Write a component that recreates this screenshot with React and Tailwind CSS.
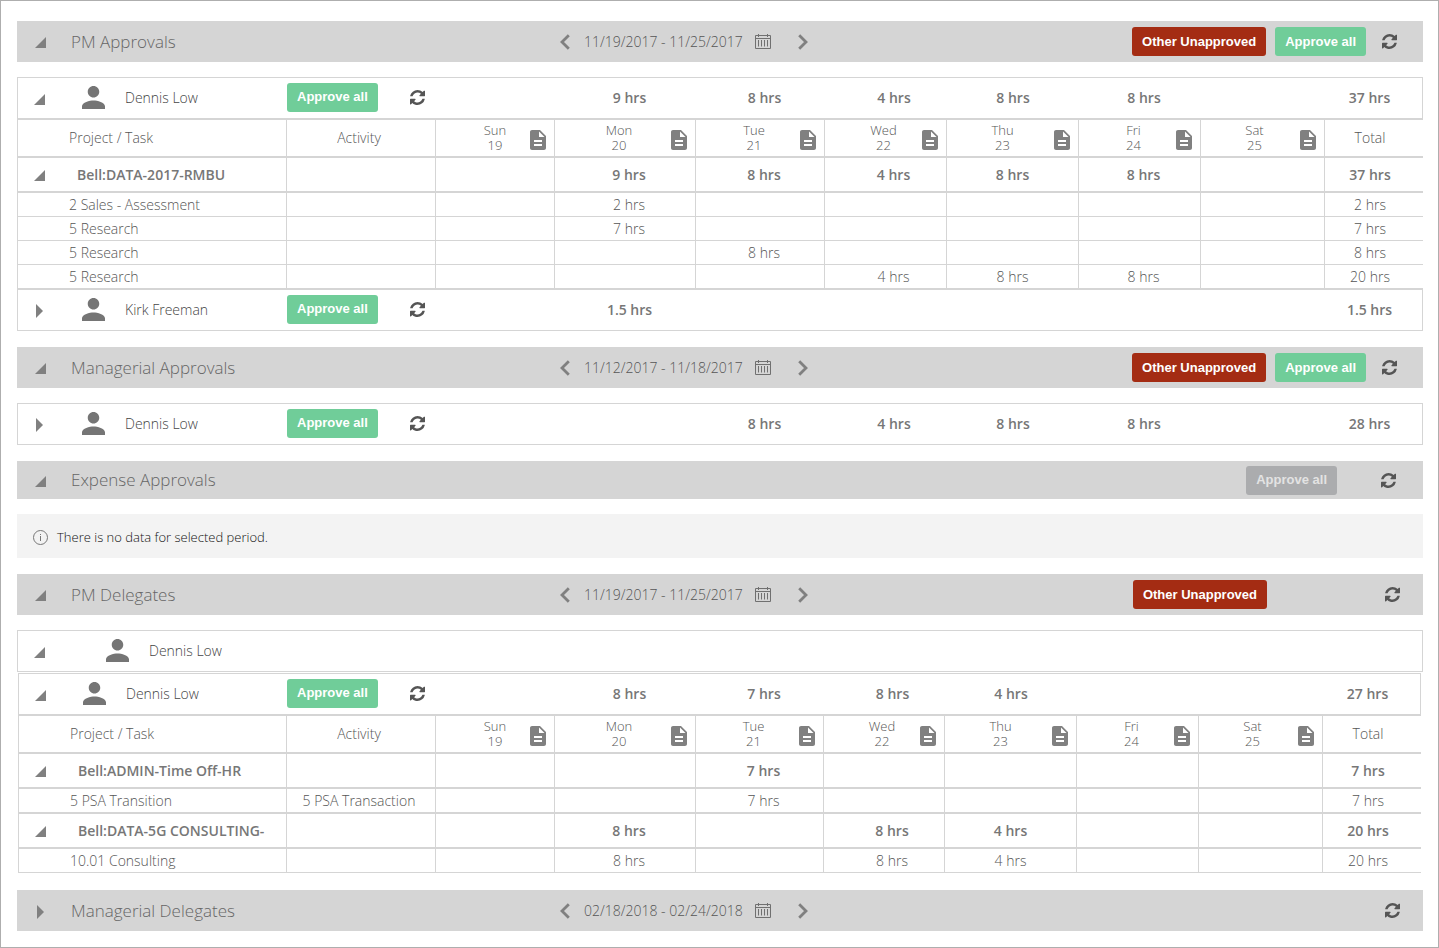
import clsx from "clsx";

// head / cell: left padding that each day column puts on its content
const DAYS = [
  { name: "Sun", date: 19, head: "pl-6", cell: "pl-2" },
  { name: "Mon", date: 20, head: "pl-3", cell: "pl-2" },
  { name: "Tue", date: 21, head: "pl-3", cell: "pl-2" },
  { name: "Wed", date: 22, head: "pl-5", cell: "pl-4" },
  { name: "Thu", date: 23, head: "pl-1", cell: "pl-0" },
  { name: "Fri", date: 24, head: "pl-3", cell: "pl-2" },
  { name: "Sat", date: 25, head: "pl-2", cell: "pl-2" },
];

const pmApprovals = [
  {
    type: "person",
    name: "Dennis Low",
    open: true,
    first: true,
    hours: ["", "9", "8", "4", "8", "8", ""],
    total: "37",
  },
  { type: "days" },
  {
    type: "project",
    name: "Bell:DATA-2017-RMBU",
    hours: ["", "9", "8", "4", "8", "8", ""],
    total: "37",
  },
  { type: "task", name: "2 Sales - Assessment", hours: ["", "2", "", "", "", "", ""], total: "2" },
  { type: "task", name: "5 Research", hours: ["", "7", "", "", "", "", ""], total: "7" },
  { type: "task", name: "5 Research", hours: ["", "", "8", "", "", "", ""], total: "8" },
  {
    type: "task",
    name: "5 Research",
    hours: ["", "", "", "4", "8", "8", ""],
    total: "20",
    thick: true,
  },
  {
    type: "person",
    name: "Kirk Freeman",
    hours: ["", "1.5", "", "", "", "", ""],
    total: "1.5",
    last: true,
  },
];

const managerialApprovals = [
  {
    type: "person",
    name: "Dennis Low",
    first: true,
    last: true,
    hours: ["", "", "8", "4", "8", "8", ""],
    total: "28",
  },
];

const pmDelegates = [
  {
    type: "person",
    name: "Dennis Low",
    open: true,
    first: true,
    hours: ["", "8", "7", "8", "4", "", ""],
    total: "27",
  },
  { type: "days" },
  {
    type: "project",
    name: "Bell:ADMIN-Time Off-HR",
    hours: ["", "", "7", "", "", "", ""],
    total: "7",
  },
  {
    type: "task",
    name: "5 PSA Transition",
    activity: "5 PSA Transaction",
    hours: ["", "", "7", "", "", "", ""],
    total: "7",
    thick: true,
  },
  {
    type: "project",
    name: "Bell:DATA-5G CONSULTING-",
    hours: ["", "8", "", "8", "4", "", ""],
    total: "20",
  },
  {
    type: "task",
    name: "10.01 Consulting",
    hours: ["", "8", "", "8", "4", "", ""],
    total: "20",
  },
];

function RefreshIcon() {
  return (
    <svg viewBox="0 128 1536 1536" className="w-[15px] h-[15px] fill-[#555]">
      <path d="M1511 1056q0 5-1 7-64 268-268 434.500t-478 166.500q-146 0-282.500-55t-243.500-157l-129 129q-19 19-45 19t-45-19-19-45v-448q0-26 19-45t45-19h448q26 0 45 19t19 45-19 45l-137 137q71 66 161 102t187 36q134 0 250-65t186-179q11-17 53-117 8-23 30-23h192q13 0 22.500 9.500t9.500 22.500zm25-800v448q0 26-19 45t-45 19h-448q-26 0-45-19t-19-45 19-45l138-138q-148-137-349-137-134 0-250 65t-186 179q-11 17-53 117-8 23-30 23h-199q-13 0-22.500-9.500t-9.500-22.500v-7q65-268 270-434.500t480-166.500q146 0 284 55.500t245 156.500l130-129q19-19 45-19t45 19 19 45z" />
    </svg>
  );
}

function PersonIcon() {
  return (
    <svg viewBox="4 4 16 16" className="w-[23px] h-[23px] shrink-0 fill-[#757575]">
      <path d="M12 12c2.210 0 4-1.790 4-4s-1.790-4-4-4-4 1.790-4 4 1.790 4 4 4zm0 2c-2.670 0-8 1.340-8 4v2h16v-2c0-2.660-5.330-4-8-4z" />
    </svg>
  );
}

function NoteIcon() {
  return (
    <svg viewBox="4 2 16 20" className="w-4 h-5 fill-[#808080]">
      <path d="M14 2H6c-1.100 0-1.990.9-1.990 2L4 20c0 1.100.890 2 1.990 2H18c1.100 0 2-.9 2-2V8l-6-6zm2 16H8v-2h8v2zm0-4H8v-2h8v2zm-3-5V3.500L18.500 9H13z" />
    </svg>
  );
}

function CalendarIcon() {
  return (
    <svg viewBox="0 0 16 15" className="w-4 h-[15px]" fill="none" stroke="#707070">
      <path d="M.5 1.500h15v13H.5zM.5 4.500h15M3.500 0v3M12.500 0v3M3.500 6v6.500M6.500 6v6.500M9.500 6v6.500M12.500 6v6.500" />
    </svg>
  );
}

function Chevron({ next }) {
  return (
    <svg viewBox="0 0 10 16" className="w-[10px] h-4" fill="none" stroke="#808080" strokeWidth="2.8">
      <path d={next ? "M1.200 1.200 8 8l-6.800 6.800" : "M8.800 1.200 2 8l6.800 6.800"} />
    </svg>
  );
}

function Toggle({ open, label }) {
  return (
    <button
      aria-label={label}
      aria-expanded={!!open}
      className="w-3 h-4 mt-0.5 shrink-0 flex items-center cursor-pointer"
    >
      {open ? (
        <svg viewBox="0 0 11 11" className="w-[11px] h-[11px] fill-[#808080]">
          <path d="M0 11h11V0z" />
        </svg>
      ) : (
        <svg viewBox="0 0 7 14" className="ml-0.5 w-[7px] h-[14px] fill-[#808080]">
          <path d="M0 0v14l7-7z" />
        </svg>
      )}
    </button>
  );
}

function Button({ color, children, ...props }) {
  return (
    <button
      className={clsx(
        "h-[29px] px-[10px] rounded-[3px] shrink-0 whitespace-nowrap font-['Liberation_Sans',Arial,sans-serif] text-[13px] font-bold",
        color === "red" && "bg-[#a42c13] text-white",
        color === "green" && "bg-[#70cd99] text-white",
        color === "gray" && "bg-[#abacae] text-[#e3e3e3]"
      )}
      {...props}
    >
      {children}
    </button>
  );
}

function Refresh() {
  return (
    <button aria-label="Refresh" className="shrink-0 cursor-pointer">
      <RefreshIcon />
    </button>
  );
}

function SectionBar({ title, open, range, height = "h-[41px]", children }) {
  return (
    <header className={clsx("flex items-center bg-[#d5d5d5]", height)}>
      <div className="w-[543px] shrink-0 flex items-center pl-[18px]">
        <Toggle open={open} label={title} />
        <h2 className="ml-6 text-[17px] leading-6 text-[#666]">{title}</h2>
      </div>
      {range && (
        <div className="flex items-center text-[14px] text-[#555]">
          <button aria-label="Previous week">
            <Chevron />
          </button>
          <span className="w-40 ml-[14px] whitespace-nowrap">{range}</span>
          <button aria-label="Pick dates" className="ml-[11px]">
            <CalendarIcon />
          </button>
          <button aria-label="Next week" className="ml-[27px]">
            <Chevron next />
          </button>
        </div>
      )}
      <div className="ml-auto flex items-center">{children}</div>
    </header>
  );
}

function Hours({ value }) {
  return value ? `${value} hrs` : null;
}

function PersonRow({ row }) {
  const edge = clsx(
    "border-[#d5d5d5]",
    row.first && "border-t",
    row.last ? "border-b" : "border-b-2",
    row.first && !row.last && "h-[43px]",
    row.first && row.last && "h-[42px]",
    !row.first && "h-[41px]"
  );
  return (
    <tr className="font-semibold text-[#777]">
      <td className={clsx(edge, "border-l")}>
        <div className="flex items-center pl-4">
          <Toggle open={row.open} label={row.name} />
          <span className="ml-9 -mt-0.5">
            <PersonIcon />
          </span>
          <span className="ml-5 font-light text-[#444]">{row.name}</span>
        </div>
      </td>
      <td className={edge}>
        <div className="flex items-center gap-8 pb-0.5">
          <Button color="green">Approve all</Button>
          <Refresh />
        </div>
      </td>
      {row.hours.map((h, i) => (
        <td key={i} className={clsx(edge, "text-center", DAYS[i].cell)}>
          <Hours value={h} />
        </td>
      ))}
      <td className={clsx(edge, "text-center pr-2 border-r")}>
        <Hours value={row.total} />
      </td>
    </tr>
  );
}

function DaysRow() {
  const edge = "h-[38px] border-b-2 border-[#d5d5d5] font-light";
  return (
    <tr className="text-[#555]">
      <th className={clsx(edge, "border-x pl-[51px] text-left")}>Project / Task</th>
      <th className={clsx(edge, "border-r pr-1")}>Activity</th>
      {DAYS.map((d) => (
        <th key={d.name} className={clsx(edge, "border-r text-[13px] leading-[15px]", d.head)}>
          <div className="flex items-center pr-2">
            <span className="flex-1">
              {d.name}
              <br />
              {d.date}
            </span>
            <button aria-label={`Notes for ${d.name} ${d.date}`} className="mt-1">
              <NoteIcon />
            </button>
          </div>
        </th>
      ))}
      <th className={clsx(edge, "pr-2")}>Total</th>
    </tr>
  );
}

function HoursRow({ row }) {
  const project = row.type === "project";
  const edge = clsx(
    "border-[#d5d5d5]",
    project && "h-[35px] border-b-2",
    !project && (row.thick ? "h-[25px] border-b-2" : "h-6 border-b")
  );
  return (
    <tr className={project ? "font-semibold text-[#777]" : "text-[#555]"}>
      <td className={clsx(edge, "border-x whitespace-nowrap")}>
        {project ? (
          <div className="flex items-center pl-4">
            <Toggle open label={row.name} />
            <span className="ml-[31px]">{row.name}</span>
          </div>
        ) : (
          <span className="pl-[51px]">{row.name}</span>
        )}
      </td>
      <td className={clsx(edge, "border-r pr-1 text-center whitespace-nowrap")}>{row.activity}</td>
      {row.hours.map((h, i) => (
        <td key={i} className={clsx(edge, "border-r text-center", DAYS[i].cell)}>
          <Hours value={h} />
        </td>
      ))}
      <td className={clsx(edge, "text-center pr-2")}>
        <Hours value={row.total} />
      </td>
    </tr>
  );
}

function TimeTable({ rows, nested }) {
  return (
    <table className="w-full table-fixed border-separate border-spacing-0 text-[14px] leading-5">
      <colgroup>
        <col className={nested ? "w-[269px]" : "w-[270px]"} />
        <col className="w-[149px]" />
        <col className="w-[119px]" />
        <col className="w-[141px]" />
        <col className={nested ? "w-[128px]" : "w-[129px]"} />
        <col className={nested ? "w-[121px]" : "w-[122px]"} />
        <col className="w-[132px]" />
        <col className="w-[122px]" />
        <col className="w-[124px]" />
        <col className="w-[98px]" />
      </colgroup>
      <tbody>
        {rows.map((row, i) => {
          if (row.type === "person") return <PersonRow key={i} row={row} />;
          if (row.type === "days") return <DaysRow key={i} />;
          return <HoursRow key={i} row={row} />;
        })}
      </tbody>
    </table>
  );
}

export default function App() {
  return (
    <main className="min-h-screen bg-white border border-[#aeaeae] pl-4 pr-[15px] pt-5 pb-4 flex flex-col gap-4 font-['Open_Sans',sans-serif] font-light">
      <section className="flex flex-col gap-[15px]">
        <SectionBar title="PM Approvals" open range="11/19/2017 - 11/25/2017">
          <div className="flex items-center gap-[9px] pr-4">
            <Button color="red">Other Unapproved</Button>
            <Button color="green">Approve all</Button>
          </div>
          <div className="pr-[26px] flex">
            <Refresh />
          </div>
        </SectionBar>
        <TimeTable rows={pmApprovals} />
      </section>

      <section className="flex flex-col gap-[15px]">
        <SectionBar title="Managerial Approvals" open range="11/12/2017 - 11/18/2017">
          <div className="flex items-center gap-[9px] pr-4">
            <Button color="red">Other Unapproved</Button>
            <Button color="green">Approve all</Button>
          </div>
          <div className="pr-[26px] flex">
            <Refresh />
          </div>
        </SectionBar>
        <TimeTable rows={managerialApprovals} />
      </section>

      <section className="flex flex-col gap-[15px]">
        <SectionBar title="Expense Approvals" open height="h-[38px]">
          <div className="pr-11 flex">
            <Button color="gray" disabled>
              Approve all
            </Button>
          </div>
          <div className="pr-[27px] flex">
            <Refresh />
          </div>
        </SectionBar>
        <div className="h-11 pl-4 pt-[3px] flex items-center gap-[9px] bg-[#f3f3f3] text-[#111]">
          <svg viewBox="0 0 15 15" className="w-[15px] h-[15px]" fill="none" stroke="#777">
            <circle cx="7.5" cy="7.5" r="7" />
            <path d="M7.500 6v5M7.500 4v1" />
          </svg>
          <p className="text-[13px]">There is no data for selected period.</p>
        </div>
      </section>

      <section className="flex flex-col gap-[15px]">
        <SectionBar title="PM Delegates" open range="11/19/2017 - 11/25/2017">
          <div className="pr-[118px] flex">
            <Button color="red">Other Unapproved</Button>
          </div>
          <div className="pr-[23px] flex">
            <Refresh />
          </div>
        </SectionBar>
        <div className="flex flex-col gap-px pb-px">
          <div className="h-[42px] border border-[#d5d5d5] flex items-center pl-4 text-[14px] leading-5">
            <Toggle open label="Dennis Low" />
            <span className="ml-15 -mt-0.5">
              <PersonIcon />
            </span>
            <span className="ml-5 text-[#444]">Dennis Low</span>
          </div>
          <div className="pl-px pr-0.5">
            <TimeTable rows={pmDelegates} nested />
          </div>
        </div>
      </section>

      <section>
        <SectionBar title="Managerial Delegates" range="02/18/2018 - 02/24/2018">
          <div className="pr-[23px] flex">
            <Refresh />
          </div>
        </SectionBar>
      </section>
    </main>
  );
}
